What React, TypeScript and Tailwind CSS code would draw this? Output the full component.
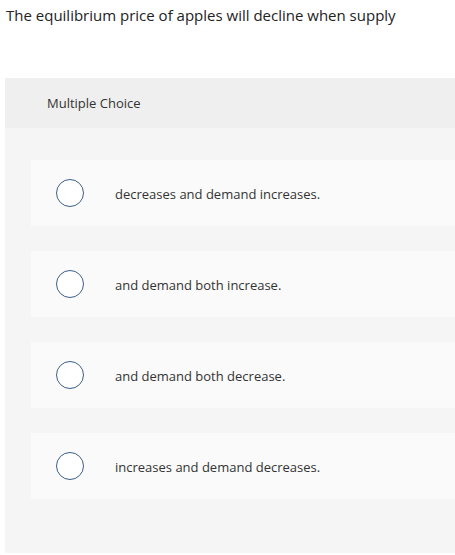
import React from 'react';

const options = [
  'decreases and demand increases.',
  'and demand both increase.',
  'and demand both decrease.',
  'increases and demand decreases.',
];

export default function App() {
  return (
    <div className="w-[455px] h-[555px] bg-white overflow-hidden text-[#333] font-['Open_Sans',_sans-serif]">
      <p className="pl-[6px] pt-[5px] text-[15px] leading-[20px] text-[#222]">
        The equilibrium price of apples will decline when supply
      </p>
      <div className="mt-[53px] ml-[5px] w-[455px]">
        <div className="h-[50px] bg-[#efefef] flex items-center pl-[42px] pt-[2px] text-[13px] text-[#333]">
          Multiple Choice
        </div>
        <div className="bg-[#f5f5f5] pl-[26px] pt-[32px] pb-[54px] flex flex-col gap-[25px]">
          {options.map(opt => (
            <label
              key={opt}
              className="h-[66px] bg-[#fafafa] flex items-center cursor-pointer"
            >
              <span className="ml-[25px] w-[28px] h-[28px] rounded-full border-[1.5px] border-[#3b5f86] bg-white shrink-0" />
              <span className="ml-[31px] mt-[3px] text-[13px] text-[#333]">{opt}</span>
            </label>
          ))}
        </div>
      </div>
    </div>
  );
}
